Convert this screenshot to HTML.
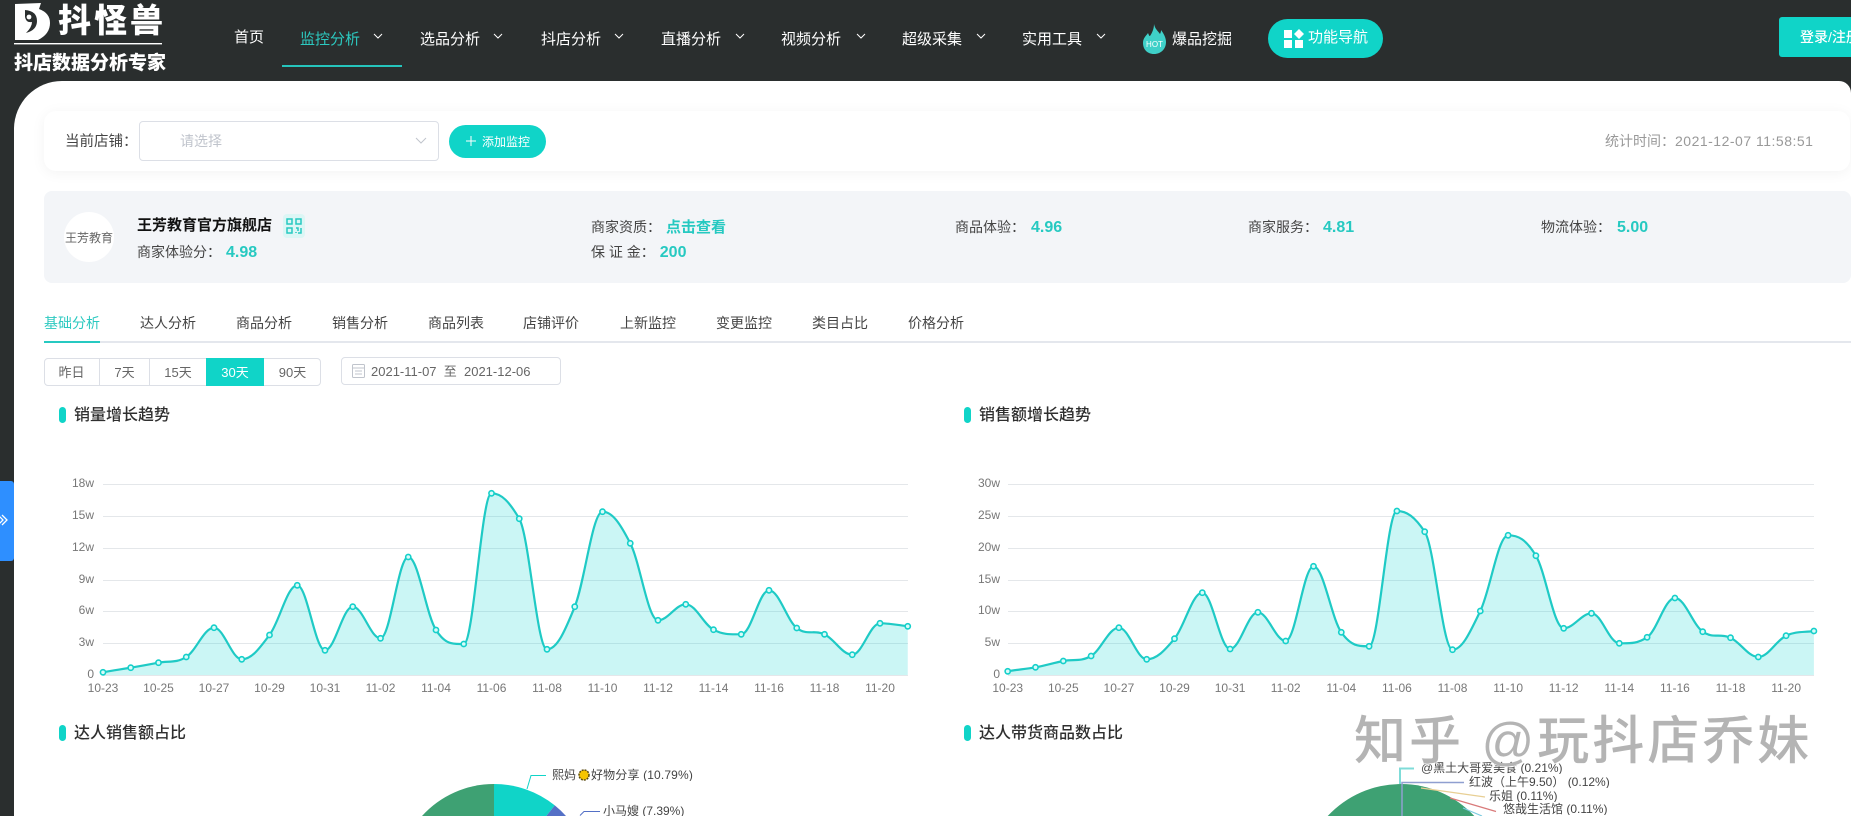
<!DOCTYPE html>
<html lang="zh"><head><meta charset="utf-8"><title>抖怪兽</title>
<style>
*{margin:0;padding:0;box-sizing:border-box}
html,body{width:1851px;height:816px;overflow:hidden;background:#2a2e2e}
body{position:relative;font-family:"Liberation Sans","Noto Sans CJK SC",sans-serif;color:#333}
.t{position:absolute;white-space:nowrap;line-height:20px;height:20px}
.b{position:absolute}
.nav{color:#fff;font-size:15px}
.tab{font-size:14px;color:#444;top:313px}
.teal{color:#26c9c1;font-weight:700}
.dt{top:363px;font-size:13px;color:#666;text-align:center}
.h{font-size:16px;color:#2f2f2f;font-weight:500}
.bar{position:absolute;width:7px;height:16px;background:#10d4c8;border-radius:4px}
.pl{position:absolute;white-space:nowrap;font-size:12px;color:#444;line-height:16px;height:14px;overflow:hidden}
svg text{font-family:"Liberation Sans","Noto Sans CJK SC",sans-serif}
</style></head><body>

<!-- main white panel -->
<div class="b" style="left:14px;top:81px;width:1837px;height:735px;background:#fff;border-radius:48px 12px 0 0"></div>

<!-- logo -->
<svg class="b" style="left:0;top:0" width="170" height="80">
<path d="M15 4L41 3 39 9Q50 13 50 23 50 34 38 40L15 40Z" fill="#fff"/>
<path d="M25 10Q37 11 37 21 37 30 26 33 32 27 32 22 26 23 25 17Z" fill="#2a2e2e"/>
<circle cx="29" cy="17" r="2.4" fill="#fff"/>
<rect x="14" y="43" width="148" height="1.4" fill="#fff"/>
</svg>
<div class="t" style="left:58px;top:3px;height:36px;line-height:36px;font-size:33px;font-weight:900;color:#fff;letter-spacing:3px">抖怪兽</div>
<div class="t" style="left:14px;top:54px;font-size:19px;font-weight:900;color:#fff">抖店数据分析专家</div>

<!-- nav -->
<div class="t nav" style="left:234px;top:28px">首页</div>
<div class="t nav" style="left:300px;top:30px;color:#2cc9c0">监控分析</div>
<div class="b" style="left:282px;top:65px;width:120px;height:2px;background:#25c4bc"></div>
<div class="t nav" style="left:420px;top:30px">选品分析</div>
<div class="t nav" style="left:541px;top:30px">抖店分析</div>
<div class="t nav" style="left:661px;top:30px">直播分析</div>
<div class="t nav" style="left:781px;top:30px">视频分析</div>
<div class="t nav" style="left:902px;top:30px">超级采集</div>
<div class="t nav" style="left:1022px;top:30px">实用工具</div>
<svg class="b" style="left:0;top:0" width="1200" height="60" fill="none" stroke="#fff" stroke-width="1">
<path d="M374 34l4 4 4-4M494 34l4 4 4-4M615 34l4 4 4-4M736 34l4 4 4-4M857 34l4 4 4-4M977 34l4 4 4-4M1097 34l4 4 4-4"/>
</svg>
<svg class="b" style="left:1142px;top:23px" width="26" height="32">
<path d="M12 1C13 6 16 8 18 11 19 9 19 8 19 7 22 11 24 15 24 19 24 26 19 31 12 31 5 31 1 26 1 20 1 15 4 13 6 10 7 12 7 13 8 13 10 10 12 6 12 1Z" fill="#3fd0c8"/>
<text x="12.5" y="24" font-size="8" fill="#fff" text-anchor="middle">HOT</text>
</svg>
<div class="t nav" style="left:1172px;top:30px">爆品挖掘</div>
<div class="b" style="left:1268px;top:19px;width:115px;height:39px;border-radius:20px;background:#10d4c8"></div>
<svg class="b" style="left:1284px;top:29px" width="20" height="20" fill="#fff">
<rect x="0" y="1" width="8" height="8"/><path d="M15 0l5 5-5 5-5-5z"/><rect x="0" y="11" width="8" height="8"/><rect x="11" y="11" width="8" height="8"/>
</svg>
<div class="t nav" style="left:1308px;top:28px">功能导航</div>
<div class="b" style="left:1779px;top:17px;width:72px;height:40px;background:#10d4c8;border-radius:3px 0 0 3px;overflow:hidden">
<div class="t" style="left:21px;top:10px;font-size:14px;color:#fff;font-weight:500">登录/注册</div></div>

<!-- store bar -->
<div class="b" style="left:44px;top:111px;width:1806px;height:60px;background:#fff;border-radius:12px;box-shadow:0 2px 14px rgba(0,0,0,.05)"></div>
<div class="t" style="left:65px;top:132px;font-size:14.5px;color:#444">当前店铺：</div>
<div class="b" style="left:139px;top:121px;width:300px;height:40px;border:1px solid #dcdfe6;border-radius:4px;background:#fff"></div>
<div class="t" style="left:180px;top:131px;font-size:14px;color:#c0c4cc">请选择</div>
<svg class="b" style="left:414px;top:136px" width="14" height="10" fill="none" stroke="#c0c4cc"><path d="M2 2l5 5 5-5"/></svg>
<div class="b" style="left:449px;top:125px;width:97px;height:33px;border-radius:17px;background:#10d4c8"></div>
<svg class="b" style="left:465px;top:135px" width="12" height="12" stroke="#fff"><path d="M6 1v10M1 6h10"/></svg>
<div class="t" style="left:482px;top:132px;font-size:12px;color:#fff">添加监控</div>
<div class="t" style="left:1605px;top:131px;font-size:14px;color:#999">统计时间：<span style="letter-spacing:.5px">2021-12-07 11:58:51</span></div>

<!-- shop panel -->
<div class="b" style="left:44px;top:191px;width:1807px;height:92px;background:#f3f5f8;border-radius:8px"></div>
<div class="b" style="left:64px;top:212px;width:50px;height:50px;border-radius:50%;background:#fff"></div>
<div class="t" style="left:65px;top:228px;font-size:12px;color:#666">王芳教育</div>
<div class="t" style="left:137px;top:216px;font-size:15px;font-weight:700;color:#111">王芳教育官方旗舰店</div>
<div class="b" style="left:283px;top:214px;width:22px;height:24px;background:#dcf6f5;border-radius:4px"></div>
<svg class="b" style="left:286px;top:218px" width="16" height="16" fill="none" stroke="#26c9c1" stroke-width="1.5">
<rect x="1" y="1" width="5" height="5"/><rect x="10" y="1" width="5" height="5"/><rect x="1" y="10" width="5" height="5"/><path d="M10 10h2v3M15 10v5h-3M10 15v-1"/>
</svg>
<div class="t" style="left:137px;top:242px;font-size:14px;color:#444">商家体验分：<span class="teal" style="font-size:16px;margin-left:5px">4.98</span></div>
<div class="t" style="left:591px;top:217px;font-size:14px;color:#444">商家资质：<span class="teal" style="margin-left:5px;font-size:15px">点击查看</span></div>
<div class="t" style="left:591px;top:242px;font-size:14px;color:#444">保 证 金：<span class="teal" style="font-size:16px;margin-left:5px">200</span></div>
<div class="t" style="left:955px;top:217px;font-size:14px;color:#444">商品体验：<span class="teal" style="font-size:16px;margin-left:6px">4.96</span></div>
<div class="t" style="left:1248px;top:217px;font-size:14px;color:#444">商家服务：<span class="teal" style="font-size:16px;margin-left:5px">4.81</span></div>
<div class="t" style="left:1541px;top:217px;font-size:14px;color:#444">物流体验：<span class="teal" style="font-size:16px;margin-left:6px">5.00</span></div>

<!-- tabs -->
<div class="b" style="left:44px;top:341px;width:1807px;height:2px;background:#e4e7ed"></div>
<div class="b" style="left:44px;top:341px;width:56px;height:2px;background:#26c9c1"></div>
<div class="t tab" style="left:44px;color:#2cc9c0">基础分析</div>
<div class="t tab" style="left:140px">达人分析</div>
<div class="t tab" style="left:236px">商品分析</div>
<div class="t tab" style="left:332px">销售分析</div>
<div class="t tab" style="left:428px">商品列表</div>
<div class="t tab" style="left:523px">店铺评价</div>
<div class="t tab" style="left:620px">上新监控</div>
<div class="t tab" style="left:716px">变更监控</div>
<div class="t tab" style="left:812px">类目占比</div>
<div class="t tab" style="left:908px">价格分析</div>

<!-- date buttons -->
<div class="b" style="left:44px;top:358px;width:277px;height:28px;border:1px solid #dcdfe6;border-radius:4px"></div>
<div class="b" style="left:99px;top:358px;width:1px;height:28px;background:#dcdfe6"></div>
<div class="b" style="left:149px;top:358px;width:1px;height:28px;background:#dcdfe6"></div>
<div class="b" style="left:206px;top:358px;width:58px;height:28px;background:#10d4c8"></div>
<div class="t dt" style="left:44px;width:55px">昨日</div>
<div class="t dt" style="left:100px;width:49px">7天</div>
<div class="t dt" style="left:150px;width:56px">15天</div>
<div class="t dt" style="left:206px;width:58px;color:#fff">30天</div>
<div class="t dt" style="left:264px;width:57px">90天</div>
<div class="b" style="left:341px;top:357px;width:220px;height:28px;border:1px solid #dcdfe6;border-radius:4px"></div>
<svg class="b" style="left:352px;top:364px" width="13" height="14" fill="none" stroke="#c0c4cc"><rect x=".5" y=".5" width="12" height="13" rx="1"/><path d="M1 4h11M3 7h7M3 10h7"/></svg>
<div class="t" style="left:371px;top:362px;font-size:13px;color:#666">2021-11-07 &nbsp;至&nbsp; 2021-12-06</div>

<!-- section titles -->
<div class="bar" style="left:59px;top:407px"></div>
<div class="t h" style="left:74px;top:406px">销量增长趋势</div>
<div class="bar" style="left:964px;top:407px"></div>
<div class="t h" style="left:979px;top:406px">销售额增长趋势</div>
<div class="bar" style="left:59px;top:725px"></div>
<div class="t h" style="left:74px;top:724px">达人销售额占比</div>
<div class="bar" style="left:964px;top:725px"></div>
<div class="t h" style="left:979px;top:724px">达人带货商品数占比</div>

<!-- charts -->
<svg class="b" style="left:0;top:0" width="1851" height="816">
<g stroke="#e4e7ea" stroke-width="1">
<path d="M103 484.5H908M103 516.5H908M103 548.5H908M103 580.5H908M103 611.5H908M103 643.5H908M103 675.5H908"/>
<path d="M1008 484.5H1814M1008 516.5H1814M1008 548.5H1814M1008 580.5H1814M1008 611.5H1814M1008 643.5H1814M1008 675.5H1814"/>
</g>
<path fill="#1ed7d2" fill-opacity=".23" d="M103 672.3C113 670.5 120.75 669.4 130.75 667.7S148.5 664.6 158.5 662.7S176.25 663.3 186.25 657S204 627.7 214 627.7S231.75 659.3 241.75 659.3S259.5 648.3 269.5 635S287.25 585.3 297.25 585.3S315 650.3 325 650.3S342.75 606.7 352.75 606.7S370.5 638.3 380.5 638.3S398.25 557 408.25 557S426 614.3 436 630S453.75 644 463.75 644S481.5 493.3 491.5 493.3S509.25 501.7 519.25 518.7S537 649.3 547 649.3S564.75 631.5 574.75 606.7S592.5 511.7 602.5 511.7S620.25 523.8 630.25 543.3S648 620.3 658 620.3S675.75 604.3 685.75 604.3S703.5 624.3 713.5 629.7S731.25 634.3 741.25 634.3S759 590.3 769 590.3S786.75 620.1 796.75 628S814.5 629.5 824.5 634.3S842.25 654.7 852.25 654.7S870 623.3 880 623.3S897.75 625 907.75 626.3V675H103Z"/>
<path fill="none" stroke="#1fcac5" stroke-width="2.2" d="M103 672.3C113 670.5 120.75 669.4 130.75 667.7S148.5 664.6 158.5 662.7S176.25 663.3 186.25 657S204 627.7 214 627.7S231.75 659.3 241.75 659.3S259.5 648.3 269.5 635S287.25 585.3 297.25 585.3S315 650.3 325 650.3S342.75 606.7 352.75 606.7S370.5 638.3 380.5 638.3S398.25 557 408.25 557S426 614.3 436 630S453.75 644 463.75 644S481.5 493.3 491.5 493.3S509.25 501.7 519.25 518.7S537 649.3 547 649.3S564.75 631.5 574.75 606.7S592.5 511.7 602.5 511.7S620.25 523.8 630.25 543.3S648 620.3 658 620.3S675.75 604.3 685.75 604.3S703.5 624.3 713.5 629.7S731.25 634.3 741.25 634.3S759 590.3 769 590.3S786.75 620.1 796.75 628S814.5 629.5 824.5 634.3S842.25 654.7 852.25 654.7S870 623.3 880 623.3S897.75 625 907.75 626.3"/>
<path fill="#1ed7d2" fill-opacity=".23" d="M1007.7 671.3C1017.7 669.5 1025.5 669.2 1035.5 667.3S1053.3 663 1063.3 661S1081.1 662 1091.1 656S1108.9 627.7 1118.9 627.7S1136.7 659.3 1146.7 659.3S1164.5 650.7 1174.5 638.7S1192.3 592.7 1202.3 592.7S1220.1 649 1230.1 649S1247.9 612.3 1257.9 612.3S1275.7 641 1285.7 641S1303.5 566.3 1313.5 566.3S1331.3 617.9 1341.3 632.3S1359.1 646.3 1369.1 646.3S1386.9 511 1396.9 511S1414.7 516.7 1424.7 531.7S1442.5 649.7 1452.5 649.7S1470.3 631.6 1480.3 611S1498.1 535.3 1508.1 535.3S1525.9 539 1535.9 555.7S1553.7 628.3 1563.7 628.3S1581.5 613.3 1591.5 613.3S1609.3 643.3 1619.3 643.3S1637.1 644 1647.1 637.3S1664.9 598 1674.9 598S1692.7 624.6 1702.7 631.7S1720.5 633.1 1730.5 637.7S1748.3 657 1758.3 657S1776.1 640.4 1786.1 635.7S1803.9 632.5 1813.9 631V675H1007.7Z"/>
<path fill="none" stroke="#1fcac5" stroke-width="2.2" d="M1007.7 671.3C1017.7 669.5 1025.5 669.2 1035.5 667.3S1053.3 663 1063.3 661S1081.1 662 1091.1 656S1108.9 627.7 1118.9 627.7S1136.7 659.3 1146.7 659.3S1164.5 650.7 1174.5 638.7S1192.3 592.7 1202.3 592.7S1220.1 649 1230.1 649S1247.9 612.3 1257.9 612.3S1275.7 641 1285.7 641S1303.5 566.3 1313.5 566.3S1331.3 617.9 1341.3 632.3S1359.1 646.3 1369.1 646.3S1386.9 511 1396.9 511S1414.7 516.7 1424.7 531.7S1442.5 649.7 1452.5 649.7S1470.3 631.6 1480.3 611S1498.1 535.3 1508.1 535.3S1525.9 539 1535.9 555.7S1553.7 628.3 1563.7 628.3S1581.5 613.3 1591.5 613.3S1609.3 643.3 1619.3 643.3S1637.1 644 1647.1 637.3S1664.9 598 1674.9 598S1692.7 624.6 1702.7 631.7S1720.5 633.1 1730.5 637.7S1748.3 657 1758.3 657S1776.1 640.4 1786.1 635.7S1803.9 632.5 1813.9 631"/>
<g fill="#d8fbf9" stroke="#15d0ca" stroke-width="1.6">
<circle cx="103" cy="672.3" r="2.6"/><circle cx="130.75" cy="667.7" r="2.6"/><circle cx="158.5" cy="662.7" r="2.6"/><circle cx="186.25" cy="657" r="2.6"/><circle cx="214" cy="627.7" r="2.6"/><circle cx="241.75" cy="659.3" r="2.6"/><circle cx="269.5" cy="635" r="2.6"/><circle cx="297.25" cy="585.3" r="2.6"/><circle cx="325" cy="650.3" r="2.6"/><circle cx="352.75" cy="606.7" r="2.6"/><circle cx="380.5" cy="638.3" r="2.6"/><circle cx="408.25" cy="557" r="2.6"/><circle cx="436" cy="630" r="2.6"/><circle cx="463.75" cy="644" r="2.6"/><circle cx="491.5" cy="493.3" r="2.6"/><circle cx="519.25" cy="518.7" r="2.6"/><circle cx="547" cy="649.3" r="2.6"/><circle cx="574.75" cy="606.7" r="2.6"/><circle cx="602.5" cy="511.7" r="2.6"/><circle cx="630.25" cy="543.3" r="2.6"/><circle cx="658" cy="620.3" r="2.6"/><circle cx="685.75" cy="604.3" r="2.6"/><circle cx="713.5" cy="629.7" r="2.6"/><circle cx="741.25" cy="634.3" r="2.6"/><circle cx="769" cy="590.3" r="2.6"/><circle cx="796.75" cy="628" r="2.6"/><circle cx="824.5" cy="634.3" r="2.6"/><circle cx="852.25" cy="654.7" r="2.6"/><circle cx="880" cy="623.3" r="2.6"/><circle cx="907.75" cy="626.3" r="2.6"/>
<circle cx="1007.7" cy="671.3" r="2.6"/><circle cx="1035.5" cy="667.3" r="2.6"/><circle cx="1063.3" cy="661" r="2.6"/><circle cx="1091.1" cy="656" r="2.6"/><circle cx="1118.9" cy="627.7" r="2.6"/><circle cx="1146.7" cy="659.3" r="2.6"/><circle cx="1174.5" cy="638.7" r="2.6"/><circle cx="1202.3" cy="592.7" r="2.6"/><circle cx="1230.1" cy="649" r="2.6"/><circle cx="1257.9" cy="612.3" r="2.6"/><circle cx="1285.7" cy="641" r="2.6"/><circle cx="1313.5" cy="566.3" r="2.6"/><circle cx="1341.3" cy="632.3" r="2.6"/><circle cx="1369.1" cy="646.3" r="2.6"/><circle cx="1396.9" cy="511" r="2.6"/><circle cx="1424.7" cy="531.7" r="2.6"/><circle cx="1452.5" cy="649.7" r="2.6"/><circle cx="1480.3" cy="611" r="2.6"/><circle cx="1508.1" cy="535.3" r="2.6"/><circle cx="1535.9" cy="555.7" r="2.6"/><circle cx="1563.7" cy="628.3" r="2.6"/><circle cx="1591.5" cy="613.3" r="2.6"/><circle cx="1619.3" cy="643.3" r="2.6"/><circle cx="1647.1" cy="637.3" r="2.6"/><circle cx="1674.9" cy="598" r="2.6"/><circle cx="1702.7" cy="631.7" r="2.6"/><circle cx="1730.5" cy="637.7" r="2.6"/><circle cx="1758.3" cy="657" r="2.6"/><circle cx="1786.1" cy="635.7" r="2.6"/><circle cx="1813.9" cy="631" r="2.6"/>
</g>
<g font-size="12" fill="#777" text-anchor="end">
<text x="94" y="487">18w</text><text x="94" y="519">15w</text><text x="94" y="551">12w</text><text x="94" y="583">9w</text><text x="94" y="614">6w</text><text x="94" y="646">3w</text><text x="94" y="678">0</text>
<text x="1000" y="487">30w</text><text x="1000" y="519">25w</text><text x="1000" y="551">20w</text><text x="1000" y="583">15w</text><text x="1000" y="614">10w</text><text x="1000" y="646">5w</text><text x="1000" y="678">0</text>
</g>
<g font-size="12" fill="#777" text-anchor="middle">
<text x="103" y="692">10-23</text><text x="158.5" y="692">10-25</text><text x="214" y="692">10-27</text><text x="269.5" y="692">10-29</text><text x="325" y="692">10-31</text><text x="380.5" y="692">11-02</text><text x="436" y="692">11-04</text><text x="491.5" y="692">11-06</text><text x="547" y="692">11-08</text><text x="602.5" y="692">11-10</text><text x="658" y="692">11-12</text><text x="713.5" y="692">11-14</text><text x="769" y="692">11-16</text><text x="824.5" y="692">11-18</text><text x="880" y="692">11-20</text>
<text x="1007.7" y="692">10-23</text><text x="1063.3" y="692">10-25</text><text x="1118.9" y="692">10-27</text><text x="1174.5" y="692">10-29</text><text x="1230.1" y="692">10-31</text><text x="1285.7" y="692">11-02</text><text x="1341.3" y="692">11-04</text><text x="1396.9" y="692">11-06</text><text x="1452.5" y="692">11-08</text><text x="1508.1" y="692">11-10</text><text x="1563.7" y="692">11-12</text><text x="1619.3" y="692">11-14</text><text x="1674.9" y="692">11-16</text><text x="1730.5" y="692">11-18</text><text x="1786.1" y="692">11-20</text>
</g>

<!-- pie 1 -->
<path d="M422 816A97 97 0 0 1 494 784V816Z" fill="#3ea173"/>
<path d="M494 816V784A97 97 0 0 1 554.8 805.4L546.3 816Z" fill="#10d4c8"/>
<path d="M546.3 816L554.8 805.4A97 97 0 0 1 566 816Z" fill="#5470c6"/>
<path d="M527 789L531 775.5H546" fill="none" stroke="#10d4c8"/>
<path d="M580 815.5L584 811.5H600" fill="none" stroke="#5470c6"/>
<circle cx="584" cy="775" r="5" fill="#f5c400" stroke="#5a4a10" stroke-width="1.5" stroke-dasharray="2 1"/>

<!-- pie 2 -->
<path d="M1327.7 816A100 100 0 0 1 1474.3 816Z" fill="#3ea173"/>
<path d="M1400 784V768.5H1414" fill="none" stroke="#7fdcd8" stroke-width="2"/>
<path d="M1402 816V782.5H1464" fill="none" stroke="#8f9fd0" stroke-width="1.5"/>
<path d="M1421 788L1485 797" fill="none" stroke="#e8cf94" stroke-width="1.2"/>
<path d="M1450 798L1496 811.5" fill="none" stroke="#d97a7a" stroke-width="1.2"/>
<path d="M1463 808L1482 816" fill="none" stroke="#7ccbe0" stroke-width="1.2"/>
</svg>

<!-- pie labels -->
<div class="pl" style="left:552px;top:767px">熙妈</div>
<div class="pl" style="left:591px;top:767px;letter-spacing:.15px">好物分享 (10.79%)</div>
<div class="pl" style="left:603px;top:803px;height:13px">小马嫂 (7.39%)</div>
<div class="pl" style="left:1421px;top:760px">@黑土大哥爱美食 (0.21%)</div>
<div class="pl" style="left:1469px;top:774px">红波（上午9.50） (0.12%)</div>
<div class="pl" style="left:1489px;top:788px">乐姐 (0.11%)</div>
<div class="pl" style="left:1503px;top:801px;height:14px">悠哉生活馆 (0.11%)</div>

<!-- sidebar toggle -->
<div class="b" style="left:0;top:481px;width:14px;height:80px;background:#2e8fff;border-radius:0 3px 3px 0"></div>
<svg class="b" style="left:0;top:513px" width="10" height="14" fill="none" stroke="#fff" stroke-width="1.3"><path d="M-2 2l5 5-5 5M2 2l5 5-5 5"/></svg>

<!-- watermark -->
<div class="t" style="left:1354px;top:711px;height:62px;line-height:62px;font-size:52px;font-weight:500;color:#b4b4b4;letter-spacing:3px;text-shadow:1px 1px 0 rgba(255,255,255,.7)">知乎 @玩抖店乔妹</div>
</body></html>
